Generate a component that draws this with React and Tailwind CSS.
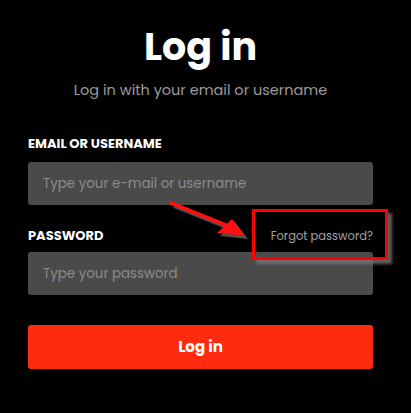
export default function App() {
  return (
    <div
      className="relative min-h-[413px] w-[411px] bg-black text-white"
      style={{ fontFamily: "Poppins, 'Open Sans', sans-serif" }}
    >
      <div className="ml-[28px] w-[345px] pt-[23px]">
        <h1 className="text-center text-[38px] font-bold leading-[48px]">Log in</h1>
        <p className="mt-[9px] text-center text-[14.5px] leading-[20px] text-[#9b9b9b]">
          Log in with your email or username
        </p>

        <form className="mt-[35px] flex flex-col">
          <label className="text-[13px] font-bold leading-[18px]">EMAIL OR USERNAME</label>
          <input
            type="text"
            placeholder="Type your e-mail or username"
            className="mt-[9px] h-[43px] rounded-[3px] bg-[#4a4a4a] px-[15px] text-[13.4px] text-white placeholder:text-[#8b8b8b] focus:outline-none"
          />

          <div className="mt-[22px] flex items-center justify-between">
            <label className="text-[13px] font-bold leading-[18px]">PASSWORD</label>
            <a className="text-[11.5px] leading-[18px] text-[#a3a3a3]">Forgot password?</a>
          </div>
          <input
            type="password"
            placeholder="Type your password"
            className="mt-[7px] h-[43px] rounded-[3px] bg-[#4a4a4a] px-[15px] text-[13.4px] text-white placeholder:text-[#8b8b8b] focus:outline-none"
          />

          <button
            type="button"
            className="mt-[30px] h-[44px] rounded-[3px] bg-[#ff2b10] text-[15px] font-bold text-white"
          >
            Log in
          </button>
        </form>
      </div>

      {/* annotation: box + arrow */}
      <div className="absolute left-[252px] top-[209px] h-[51px] w-[136px] border-[3px] border-[#ff0000] shadow-[4px_4px_3px_rgba(120,120,120,0.8)]" />
      <svg className="absolute left-0 top-0" width="411" height="413" viewBox="0 0 411 413">
        <g transform="translate(3 3)" fill="#6e6e6e" stroke="#6e6e6e" opacity="0.7">
          <line x1="171" y1="203" x2="228" y2="226" strokeWidth="4" />
          <polygon points="245,236 217,233 232,219" stroke="none" />
        </g>
        <g fill="#ff1010" stroke="#ff1010">
          <line x1="171" y1="203" x2="228" y2="226" strokeWidth="4" strokeLinecap="round" />
          <polygon points="245,236 217,233 232,219" stroke="none" />
        </g>
      </svg>
    </div>
  );
}
